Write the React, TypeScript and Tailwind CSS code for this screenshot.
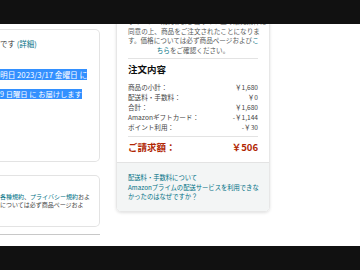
import React from 'react';

const jp = { fontFamily: '"Noto Sans CJK JP", "Noto Sans", sans-serif' };

function Row({ label, value }: { label: string; value: string }) {
  return (
    <div className="flex justify-between h-[10px] leading-[10px] text-[6.6px] text-[#444]">
      <span>{label}</span>
      <span>{value}</span>
    </div>
  );
}

export default function App() {
  return (
    <div className="w-[360px] h-[270px] flex flex-col bg-white" style={jp}>
      {/* top bar */}
      <div className="h-[24px] bg-[#111] shrink-0" />

      {/* content */}
      <div className="h-[222px] flex overflow-hidden">
        {/* left column */}
        <div className="w-[100px] shrink-0 flex flex-col">
          <div className="mt-[5px] h-[133px] border border-l-0 border-[#e3e3e3] rounded-r-[5px] pt-[8px]">
            <div className="text-[7.5px] leading-[12px] text-[#333] whitespace-nowrap">
              です <span className="text-[#007185]">(詳細)</span>
            </div>
            <div className="mt-[19px] text-[7.7px] leading-[11px] whitespace-nowrap">
              <span className="bg-[#3390ff] text-white">明日 2023/3/17 金曜日 に</span>
            </div>
            <div className="mt-[9px] text-[7.3px] leading-[11px] whitespace-nowrap">
              <span className="bg-[#3390ff] text-white">9 日曜日 に お届けします</span>
            </div>
          </div>

          <div className="mt-[13px] h-[52px] border border-l-0 border-[#e3e3e3] rounded-r-[5px] pt-[17px]">
            <div className="text-[6px] leading-[8px] text-[#444] whitespace-nowrap">
              <span className="text-[#007185]">各種規約</span>、
              <span className="text-[#007185]">プライバシー規約</span>およ
            </div>
            <div className="text-[6px] leading-[8px] text-[#444] whitespace-nowrap">
              については必ず商品ページおよ
            </div>
          </div>

          <div className="mt-[7px] h-px bg-[#c8c8c8]" />
        </div>

        {/* right column: order summary card */}
        <div className="ml-[16px] w-[154px] shrink-0 -mt-[8px] self-start rounded-[5px] border border-[#e7e7e7] shadow-[0_1px_3px_rgba(0,0,0,0.12)] overflow-hidden">
          <div className="px-[11px]">
            <div className="text-center text-[6.6px] leading-[9.5px] text-[#565959] whitespace-nowrap">
              <div>ライバシー規約および当サイト上の販売条件に</div>
              <div>同意の上、商品をご注文されたことになりま</div>
              <div>す。価格については必ず商品ページおよび<span className="text-[#007185]">こ</span></div>
              <div><span className="text-[#007185]">ちら</span>をご確認ください。</div>
            </div>
            <div className="mt-[3px] h-px bg-[#e3e3e3]" />

            <div className="mt-[3px] text-[9.5px] leading-[14px] font-bold text-[#0f1111]">注文内容</div>

            <div className="mt-[6px] flex flex-col">
              <Row label="商品の小計：" value="￥1,680" />
              <Row label="配送料・手数料：" value="￥0" />
              <Row label="合計：" value="￥1,680" />
              <Row label="Amazonギフトカード：" value="-￥1,144" />
              <Row label="ポイント利用：" value="-￥30" />
            </div>
            <div className="mt-[4px] h-px bg-[#e3e3e3]" />

            <div className="mt-[3px] mb-[8px] flex justify-between text-[9.5px] leading-[14px] font-bold text-[#b12704]">
              <span>ご請求額：</span>
              <span>￥506</span>
            </div>
          </div>

          <div className="bg-[#f3f5f5] border-t border-[#e3e3e3] px-[11px] pt-[10px] pb-[9px] text-[6.3px] leading-[9.5px] text-[#007185] whitespace-nowrap">
            <div>配送料・手数料について</div>
            <div>Amazonプライムの配送サービスを利用できな</div>
            <div>かったのはなぜですか？</div>
          </div>
        </div>
      </div>

      {/* bottom bar */}
      <div className="h-[24px] bg-[#111] shrink-0" />
    </div>
  );
}
